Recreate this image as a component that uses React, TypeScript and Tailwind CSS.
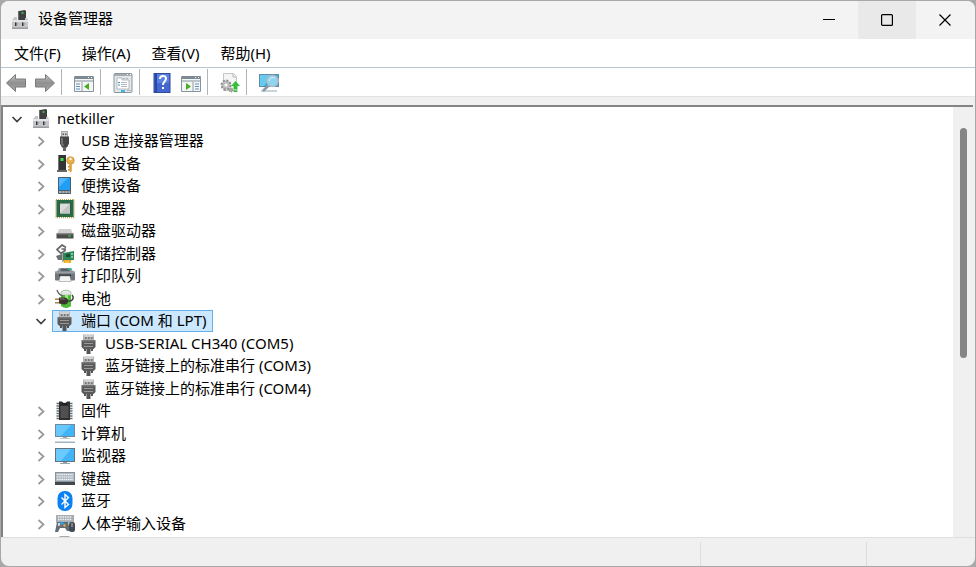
import { useState, ReactNode } from "react";

interface INode {
  name: string;
  level: number;
  icon: ReactNode;
  isOpen?: boolean;
}

interface IButtonProps {
  label: string;
  children: ReactNode;
}

const Svg = ({ children }: { children: ReactNode }) => (
  <svg viewBox="0 0 20 20" className="h-5 w-5 flex-none" aria-hidden="true">
    {children}
  </svg>
);

const ComputerIcon = () => (
  <Svg>
    <path d="M9 1l6-1 1 1v9H9z" fill="#3f3f3f" />
    <path d="M8 1h1v9H8z" fill="#6e6e6e" />
    <rect x="11.500" y="2" width="2" height="2" fill="#2fb845" />
    <path d="M2 10l2-2V7h3v3h8V8h2l1 2v8.500H2z" fill="#c4c5c9" />
    <path d="M2 10h16v2H2z" fill="#e3e4e7" />
    <path d="M2 17.500h16V19H2z" fill="#9b9ca0" />
    <rect x="5" y="12.500" width="1.500" height="3.500" fill="#333" />
    <rect x="12" y="12.500" width="1.500" height="3.500" fill="#333" />
    <path d="M6.500 13h1v2h-1zM13.500 13h1v2h-1z" fill="#8b8b8b" />
  </Svg>
);

const UsbIcon = () => (
  <Svg>
    <rect x="6" y="0" width="7" height="6" fill="#a8a8a8" />
    <path d="M7 1h5v5H7z" fill="#d2d2d2" />
    <path d="M7.500 2.500h1.500V4H7.500zM10 2.500h1.500V4H10z" fill="#555" />
    <path d="M5 5.500h9v7l-2 4H7l-2-4z" fill="#454545" />
    <path d="M6 7h2v5l1 3H7l-1-3z" fill="#757575" />
    <path d="M8 16h3v4H8z" fill="#666" />
  </Svg>
);

const SecurityIcon = () => (
  <Svg>
    <path d="M3 1h8v15H3z" fill="#343434" />
    <path d="M3 1h1v15H3z" fill="#777" />
    <path d="M2 16h10v2H2z" fill="#666" />
    <rect x="5.500" y="4" width="3" height="3" fill="#39e54b" />
    <circle cx="15.500" cy="6.500" r="3.800" fill="#e9b04a" stroke="#c08a30" strokeWidth="0.700" />
    <circle cx="15.500" cy="5" r="1.200" fill="#fff" />
    <path d="M14.300 10h2.500v7l-1.300 1.500-1.200-1.500z" fill="#dfa038" />
    <path d="M13 12h1.500v1.500H13zM13 15h1.500v1.500H13z" fill="#c78b2a" />
  </Svg>
);

const PortableIcon = () => (
  <Svg>
    <rect x="3" y="1" width="13" height="17" rx="0.700" fill="#4f5c66" />
    <path d="M4 2h11v12H4z" fill="#1f9ff8" />
    <path d="M4 2h9L4 11z" fill="#4fb6ff" />
    <path d="M4 15h11v2H4z" fill="#a9b4bb" />
    <path d="M7 15v2M10 15v2M13 15v2" stroke="#4f5c66" strokeWidth="0.700" />
  </Svg>
);

const CpuIcon = () => (
  <Svg>
    <rect x="1" y="0.500" width="18" height="18" fill="none" stroke="#bfa04c" strokeWidth="1.500" strokeDasharray="1 1" />
    <rect x="1.500" y="1" width="17" height="17" fill="#2a6b45" />
    <rect x="4.500" y="4" width="11" height="11" fill="#1b5434" />
    <rect x="5" y="4.500" width="10" height="10" fill="#dcdcdc" />
    <path d="M15 4.500v10H5z" fill="#c4c4c4" />
  </Svg>
);

const DiskIcon = () => (
  <Svg>
    <path d="M4 8h12l2 5H2z" fill="#d0d0d0" />
    <path d="M1.500 12.500h17V17.500h-17z" fill="#4a4a4a" />
    <path d="M1.500 12.500h17v1h-17z" fill="#808080" />
    <rect x="13" y="14.500" width="3" height="1" fill="#35dc55" />
  </Svg>
);

const StorageIcon = () => (
  <Svg>
    <path d="M11 3.500L7 1L2 5.500L6 9.500L10 6.500V5H6.500" fill="none" stroke="#666" strokeWidth="1.700" />
    <path d="M1 12l6-2 2 1v5H3z" fill="#6e6e6e" />
    <path d="M7 9h1l11-2v9l-11 1H7z" fill="#2d8759" />
    <path d="M7 9h1v9H7z" fill="#aaa" />
    <path d="M11 10h4v3h-4z" fill="#174e36" />
    <path d="M16 9h2v2h-2zM16 12h2v2h-2z" fill="#86c59e" />
    <path d="M8.500 16h7.500v3H8.500z" fill="#efa822" />
    <path d="M11 17v2M13 17v2" stroke="#fff2a8" strokeWidth="0.600" />
  </Svg>
);

const PrinterIcon = () => (
  <Svg>
    <path d="M4 2h12l3 5H1z" fill="#9da4a8" />
    <path d="M6 2.500h8l1 3H5z" fill="#566269" />
    <path d="M13 2h3l1 2h-4z" fill="#30b77d" />
    <rect x="0" y="5.500" width="20" height="9" rx="1" fill="#6f777b" />
    <path d="M0 5.500h20v2H0z" fill="#979ea2" />
    <path d="M4 8.500h12v5H4z" fill="#2c3033" />
    <path d="M5 10h10l1 5.500H4z" fill="#f3f4f4" stroke="#999" strokeWidth="0.600" />
  </Svg>
);

const BatteryIcon = () => (
  <Svg>
    <path d="M6 3q5-4 10 0v14q-5 4-10 0z" fill="#4cba35" />
    <path d="M6 3q5-4 10 0v3H6z" fill="#e2e8e4" stroke="#9aa59c" strokeWidth="0.600" />
    <path d="M10 6h3v4h-3z" fill="#9ee681" />
    <path d="M2 1c1 4 3 5 6 6" fill="none" stroke="#666" strokeWidth="1.300" />
    <path d="M12 12c7 1 7-4 5-6" fill="none" stroke="#3a3a3a" strokeWidth="1.400" />
    <path d="M4 8.500h5c3 0 4 1.500 4 3.500s-1 3.500-4 3.500l-5-1z" fill="#3a332e" />
    <path d="M5 9.500h4l2 1H5z" fill="#80766d" />
    <path d="M0 9.500h4v1.500H0zM0 13h4v1.500H0z" fill="#a3834a" />
  </Svg>
);

const PortIcon = () => (
  <Svg>
    <path d="M4 .500h11V6H4z" fill="#b4b4b4" />
    <path d="M5 1.500h9v1H5z" fill="#eee" />
    <path d="M6 3h1.500v2H6zM9 3h1.500v2H9zM12 3h1.500v2H12z" fill="#777" />
    <path d="M2.500 6h14v7l-2 2h-10l-2-2z" fill="#5a5a5a" />
    <path d="M3 6h13v1.500H3z" fill="#777" />
    <path d="M5 9h9v1H5zM5 12h9v1H5z" fill="#999" />
    <path d="M5 15h2v2H5zM12 15h2v2h-2z" fill="#555" />
    <path d="M7.500 15h4v5h-4z" fill="#555" />
  </Svg>
);

const FirmwareIcon = () => (
  <Svg>
    <path d="M1.500 2.500h16M1.500 5h16M1.500 7.500h16M1.500 10h16M1.500 12.500h16M1.500 15h16M1.500 17.500h16" stroke="#5f6f78" strokeWidth="1.300" />
    <path d="M4 .500h3c1 2 4 2 5 0h3v18.500H4z" fill="#2e2e2e" />
    <path d="M5.500 5h8v12h-8z" fill="#505050" />
    <path d="M7 1c1 2 4 2 5 0v3H7z" fill="#202020" />
  </Svg>
);

const PcIcon = () => (
  <Svg>
    <rect x="0" y="0" width="20" height="13" fill="#71899a" />
    <path d="M1 1h18v11H1z" fill="#3fb4f6" />
    <path d="M1 1h15L6 12H1z" fill="#67c8ff" />
    <path d="M8 13h4v1H8z" fill="#9cacb5" />
    <path d="M5 14h10v1H5z" fill="#bdcbd2" />
    <path d="M0 17.500h20V19H0z" fill="#9fb3c3" />
  </Svg>
);

const MonitorIcon = () => (
  <Svg>
    <rect x="0" y="2" width="20" height="14" fill="#63747e" />
    <path d="M1 3h18v12H1z" fill="#40b4f5" />
    <path d="M1 3h15L6 15H1z" fill="#6bc9ff" />
    <path d="M8 16h4v1H8z" fill="#8e9ca4" />
    <path d="M5 17h10v1H5z" fill="#98a7b0" />
  </Svg>
);

const KeyboardIcon = () => (
  <Svg>
    <rect x="0" y="3" width="20" height="13" fill="#87939d" />
    <path d="M1 4h18v8H1z" fill="#b4bdc5" />
    <path d="M2 5.500h16M2 8h16M2 10.500h16" stroke="#f2f3f4" strokeWidth="1.200" strokeDasharray="1.500 0.700" />
    <path d="M0 13h20v3H0z" fill="#42484d" />
  </Svg>
);

const BluetoothIcon = () => (
  <Svg>
    <rect x="2.500" y="0" width="15" height="20" rx="7" fill="#0a82f5" />
    <path d="M6.500 6.500l7 7-3.500 3V3.500l3.500 3-7 7" fill="none" stroke="#fff" strokeWidth="1.400" />
  </Svg>
);

const HidIcon = () => (
  <Svg>
    <path d="M1 1h18v8H1z" fill="#a6aeb4" />
    <path d="M3 3h14M3 5.500h14" stroke="#f2f2f2" strokeWidth="1.500" strokeDasharray="1.500 0.800" />
    <path d="M2 8h11l2 9h-3l-2-3H5l-2 4H0z" fill="#616d76" />
    <path d="M3 9h2v3H3z" fill="#bfe2ef" />
    <circle cx="7" cy="9.500" r="1.800" fill="#2e9ddf" />
    <circle cx="5.500" cy="11.500" r="1" fill="#db5248" />
    <circle cx="9.500" cy="11.500" r="1.200" fill="#e9ae35" />
    <rect x="14" y="8" width="6" height="10" rx="2.500" fill="#434b52" />
    <path d="M16.500 9h1v4h-1z" fill="#bbb" />
  </Svg>
);

const SoundIcon = () => (
  <Svg>
    <path d="M5 1h9l2 2v3H4V2z" fill="#9fadb8" />
  </Svg>
);

const ArrowIcon = ({ flip }: { flip?: boolean }) => (
  <Svg>
    <defs>
      <linearGradient id="arrow" x1="0" y1="0" x2="0" y2="1">
        <stop offset="0" stopColor="#c4c4c4" />
        <stop offset="0.500" stopColor="#8f8f8f" />
        <stop offset="1" stopColor="#a8a8a8" />
      </linearGradient>
    </defs>
    <path
      d={flip ? "M19.500 10l-9-8.500V6H.500v8h10v4.500z" : "M.500 10l9-8.500V6h10v8h-10v4.500z"}
      fill="url(#arrow)"
      stroke="#7b7b7b"
    />
  </Svg>
);

const ConsoleTreeIcon = () => (
  <Svg>
    <path d="M.500 3.500h19v15H.500z" fill="#f4f5f5" stroke="#89939b" />
    <path d="M1 3h18v3H1z" fill="#7d8993" />
    <path d="M14 4h1v1h-1zM17 4h1v1h-1z" fill="#fff" />
    <path d="M1 7h18v2H1z" fill="#bdc4c9" />
    <path d="M8 9v9" stroke="#929ca4" />
    <path d="M2 11h4M2 13.500h4M2 16h4" stroke="#5c93c0" />
    <path d="M15 10v7l-5-3.500z" fill="#48ad22" />
  </Svg>
);

const PropertiesIcon = () => (
  <Svg>
    <rect x="1" y="0.500" width="18" height="19" rx="1" fill="#e4e7e9" stroke="#89939b" />
    <path d="M1 1h18v2H1z" fill="#a4acb2" />
    <path d="M14 1.500h1M17 1.500h1" stroke="#fff" />
    <path d="M4 5h5v2h7v9H4z" fill="#fff" stroke="#a4acb2" strokeWidth="0.800" />
    <path d="M10 5h2v1h-2zM13 5h2v1h-2z" fill="#aab1b7" />
    <path d="M8 9.500h6M8 11.500h6M8 13.500h6" stroke="#a9b3ba" strokeWidth="0.900" />
    <path d="M5 9.500h2M5 12h2" stroke="#3095cd" />
    <path d="M8 17h4v2H8z" fill="#35b9ea" />
    <path d="M14 17h4v1h-4z" fill="#adb5bb" />
  </Svg>
);

const HelpIcon = () => (
  <Svg>
    <rect x="2" y="0.500" width="16" height="19" fill="#4467cf" stroke="#30499b" />
    <path d="M3 1h2v18H3z" fill="#2748a9" />
    <path d="M5 1h12v9H5z" fill="#5a80e2" />
    <path d="M8 6c0-4 6-4 6-.500 0 3-3 2.800-3 6.500" fill="none" stroke="#fff" strokeWidth="2" />
    <rect x="10" y="14" width="2" height="2" fill="#fff" />
  </Svg>
);

const ActionPaneIcon = () => (
  <Svg>
    <path d="M.500 3.500h19v15H.500z" fill="#f4f5f5" stroke="#89939b" />
    <path d="M1 3h18v3H1z" fill="#7d8993" />
    <path d="M14 4h1v1h-1zM17 4h1v1h-1z" fill="#fff" />
    <path d="M1 7h18v2H1z" fill="#bdc4c9" />
    <path d="M12 9v9" stroke="#929ca4" />
    <path d="M14 11h4M14 13.500h4M14 16h4" stroke="#5c93c0" />
    <path d="M5 10v7l5-3.500z" fill="#48ad22" />
  </Svg>
);

const UpdateDriverIcon = () => (
  <Svg>
    <path d="M3.500.500h10l3 3v14h-13z" fill="#f5f5f5" stroke="#c4c4c4" />
    <path d="M13 1v3h3" fill="none" stroke="#b5b5b5" />
    <circle cx="6" cy="12" r="4.500" fill="#bcbcbc" stroke="#8b8b8b" strokeWidth="2" strokeDasharray="2 1.500" />
    <circle cx="6" cy="12" r="3.500" fill="#bcbcbc" />
    <circle cx="6" cy="12" r="1.600" fill="#f8f8f8" />
    <circle cx="11" cy="17" r="2" fill="#aaa" stroke="#888" strokeDasharray="1 0.800" />
    <path d="M15.500 8l4.500 5h-2.500v3.500h-4V13H11z" fill="#35c03c" />
    <path d="M13.500 17.500h4V19h-4z" fill="#35c03c" />
  </Svg>
);

const ScanIcon = () => (
  <Svg>
    <rect x="0" y="1" width="20" height="13" fill="#668ba7" />
    <path d="M1 2h18v11H1z" fill="#35acdf" />
    <path d="M1 2h12L5 13H1z" fill="#67caef" />
    <path d="M2 18h16" stroke="#8eaabd" />
    <path d="M10 12l-6 6" stroke="#8799a5" strokeWidth="2.500" />
    <circle cx="13.500" cy="8" r="5.500" fill="#8fd5f2" stroke="#b1bec8" strokeWidth="1.500" />
    <path d="M10 8c1-4 4-4 6-3" fill="none" stroke="#e4f8ff" />
  </Svg>
);

const NODES: INode[] = [
  { name: "netkiller", level: 0, icon: <ComputerIcon />, isOpen: true },
  { name: "USB 连接器管理器", level: 1, icon: <UsbIcon /> },
  { name: "安全设备", level: 1, icon: <SecurityIcon /> },
  { name: "便携设备", level: 1, icon: <PortableIcon /> },
  { name: "处理器", level: 1, icon: <CpuIcon /> },
  { name: "磁盘驱动器", level: 1, icon: <DiskIcon /> },
  { name: "存储控制器", level: 1, icon: <StorageIcon /> },
  { name: "打印队列", level: 1, icon: <PrinterIcon /> },
  { name: "电池", level: 1, icon: <BatteryIcon /> },
  { name: "端口 (COM 和 LPT)", level: 1, icon: <PortIcon />, isOpen: true },
  { name: "USB-SERIAL CH340 (COM5)", level: 2, icon: <PortIcon /> },
  { name: "蓝牙链接上的标准串行 (COM3)", level: 2, icon: <PortIcon /> },
  { name: "蓝牙链接上的标准串行 (COM4)", level: 2, icon: <PortIcon /> },
  { name: "固件", level: 1, icon: <FirmwareIcon /> },
  { name: "计算机", level: 1, icon: <PcIcon /> },
  { name: "监视器", level: 1, icon: <MonitorIcon /> },
  { name: "键盘", level: 1, icon: <KeyboardIcon /> },
  { name: "蓝牙", level: 1, icon: <BluetoothIcon /> },
  { name: "人体学输入设备", level: 1, icon: <HidIcon /> },
];

const MENUS = ["文件(F)", "操作(A)", "查看(V)", "帮助(H)"];

const INDENTS = ["pl-0", "pl-6", "pl-12"];

const ToolButton = ({ label, children }: IButtonProps) => (
  <button
    type="button"
    aria-label={label}
    className="flex h-full w-[29px] items-center justify-center pt-0.5 hover:bg-sky-100"
  >
    {children}
  </button>
);

const Separator = () => <div className="mr-[7px] ml-[2px] h-[26px] w-px bg-[#b4b4b4]" />;

const WindowButton = ({ label, children }: IButtonProps) => (
  <button
    type="button"
    aria-label={label}
    className={`${
      label === "最大化" ? "bg-[#e9e9e9]" : ""
    } flex w-[58px] items-center justify-center`}
  >
    <svg viewBox="0 0 12 12" className="h-3 w-3" fill="none" stroke="#000" strokeWidth="1.2">
      {children}
    </svg>
  </button>
);

const Chevron = ({ isOpen }: { isOpen?: boolean }) => (
  <button
    type="button"
    aria-label={isOpen ? "折叠" : "展开"}
    className="flex w-6 flex-none items-center justify-center pl-0.5"
  >
    <svg viewBox="0 0 12 12" className="h-3 w-3" fill="none" strokeWidth="1.7">
      {isOpen ? (
        <path d="M1.500 4L6 8.500 10.500 4" stroke="#404040" />
      ) : (
        <path d="M3.500 2l5 4.500-5 4.500" stroke="#999" />
      )}
    </svg>
  </button>
);

const App = () => {
  const [selected, setSelected] = useState("端口 (COM 和 LPT)");

  return (
    <div className="h-screen bg-[#a8a8a8] p-px font-['Noto_Sans','Noto_Sans_CJK_SC',sans-serif] text-[15px] leading-5 text-black">
      <div className="flex h-full flex-col overflow-hidden rounded-lg bg-[#f0f0f0]">
        <header className="flex h-[38px] flex-none bg-[#f3f3f3] pr-px">
          <div className="flex flex-1 items-center gap-2 pl-[9px] font-['Noto_Sans_CJK_SC',sans-serif]">
            <ComputerIcon />
            <h1 className="pb-1">设备管理器</h1>
          </div>
          <WindowButton label="最小化">
            <path d="M0 5.500h12" />
          </WindowButton>
          <WindowButton label="最大化">
            <rect x="0.600" y="0.600" width="10.800" height="10.800" rx="1" />
          </WindowButton>
          <WindowButton label="关闭">
            <path d="M.500.500l11 11M11.500.500l-11 11" />
          </WindowButton>
        </header>

        <nav className="flex h-[29px] flex-none gap-px border-b border-[#bcc5cd] bg-white pl-[3px]">
          {MENUS.map((menu) => (
            <button key={menu} type="button" className="px-[10px] hover:bg-sky-100">
              {menu}
            </button>
          ))}
        </nav>

        <div className="flex h-[29px] flex-none items-center border-b border-[#e3e3e3] bg-white">
          <ToolButton label="后退">
            <ArrowIcon />
          </ToolButton>
          <ToolButton label="前进">
            <ArrowIcon flip />
          </ToolButton>
          <Separator />
          <ToolButton label="显示/隐藏控制台树">
            <ConsoleTreeIcon />
          </ToolButton>
          <Separator />
          <ToolButton label="属性">
            <PropertiesIcon />
          </ToolButton>
          <Separator />
          <ToolButton label="帮助">
            <HelpIcon />
          </ToolButton>
          <ToolButton label="显示/隐藏操作窗格">
            <ActionPaneIcon />
          </ToolButton>
          <Separator />
          <ToolButton label="更新驱动程序">
            <UpdateDriverIcon />
          </ToolButton>
          <Separator />
          <ToolButton label="扫描检测硬件改动">
            <ScanIcon />
          </ToolButton>
        </div>

        <main className="mt-2 mr-[2px] flex min-h-0 flex-1 border-t-2 border-l-2 border-[#838383] bg-white pl-px">
          <ul role="tree" className="min-w-0 flex-1 overflow-hidden">
            {NODES.map((node) => (
              <li
                key={node.name}
                role="treeitem"
                aria-level={node.level + 1}
                aria-selected={node.name === selected}
                className={`${INDENTS[node.level]} flex odd:h-[23px] even:h-[22px]`}
              >
                {node.level < 2 ? <Chevron isOpen={node.isOpen} /> : <div className="w-6" />}
                <div
                  onClick={() => setSelected(node.name)}
                  className={`${
                    node.name === selected
                      ? "border-[#66afe9] bg-[#cce8ff]"
                      : "border-transparent"
                  } flex items-center gap-1.5 border pr-1.5 pl-0.5 whitespace-nowrap`}
                >
                  {node.icon}
                  <span className="pb-0.5">{node.name}</span>
                </div>
              </li>
            ))}
            <li role="treeitem" aria-level={2} aria-label="声音" className="pl-[51px]">
              <SoundIcon />
            </li>
          </ul>
          <div className="flex w-5 flex-none justify-center bg-[#f0f0f0] pt-[21px]">
            <div className="h-[230px] w-[7px] rounded-sm bg-[#858585]" />
          </div>
        </main>

        <footer className="flex h-[29px] flex-none border-t border-[#dedede] pt-1">
          <div className="flex-1 border-r border-[#dedede]" />
          <div className="w-[166px] border-r border-[#dedede]" />
          <div className="w-[108px]" />
        </footer>
      </div>
    </div>
  );
};

export default App;
